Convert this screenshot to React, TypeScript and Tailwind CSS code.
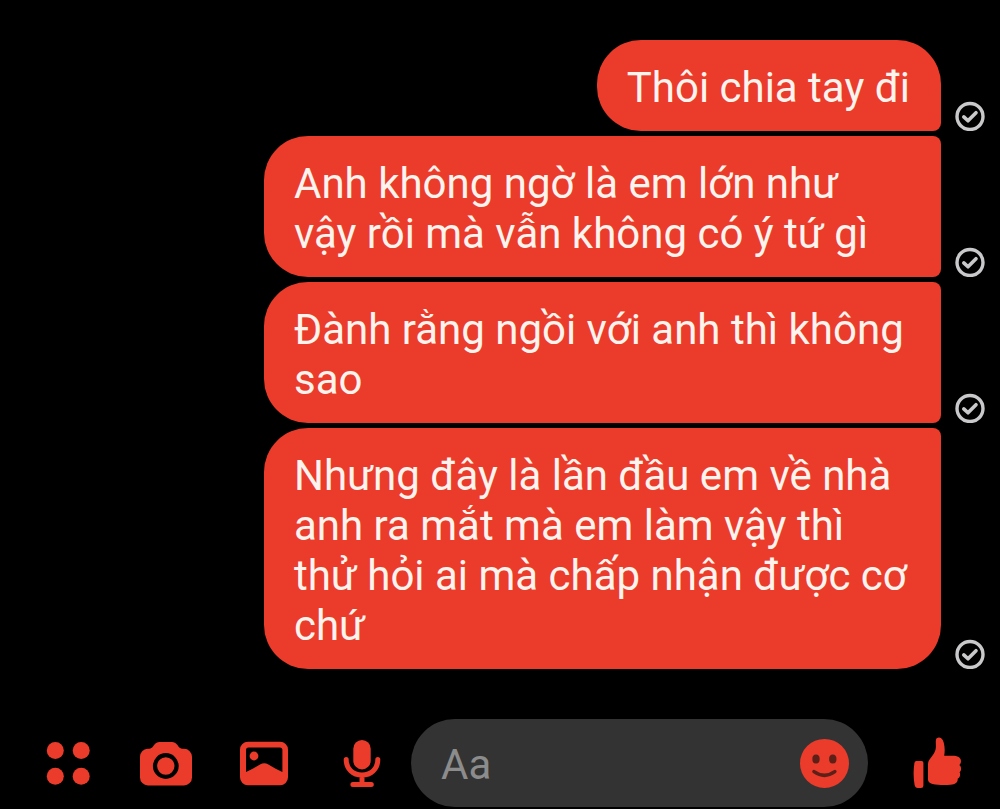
import React from 'react';

type Message = { text: string; shape: string };

const messages: Message[] = [
  { text: 'Thôi chia tay đi', shape: 'rounded-tr-[44px] rounded-br-lg' },
  { text: 'Anh không ngờ là em lớn như vậy rồi mà vẫn không có ý tứ gì', shape: 'rounded-r-lg' },
  { text: 'Đành rằng ngồi với anh thì không sao', shape: 'rounded-r-lg' },
  {
    text: 'Nhưng đây là lần đầu em về nhà anh ra mắt mà em làm vậy thì thử hỏi ai mà chấp nhận được cơ chứ',
    shape: 'rounded-tr-lg rounded-br-[44px]',
  },
];

function SentIcon() {
  return (
    <svg viewBox="0 0 30 30" className="size-[30px] shrink-0" fill="none" stroke="#c9c9cb" role="img" aria-label="Đã gửi">
      <circle cx="15" cy="15.5" r="13" strokeWidth="3.4" />
      <path d="M8.8 15.9 L13 19.8 L21 11.7" strokeWidth="3.6" strokeLinecap="round" strokeLinejoin="round" />
    </svg>
  );
}

function Icon({ children }: { children: React.ReactNode }) {
  return (
    <svg viewBox="0 0 56 56" className="size-14 shrink-0" fill="currentColor" aria-hidden="true">
      {children}
    </svg>
  );
}

const actions = [
  {
    label: 'Thêm',
    icon: (
      <Icon>
        <circle cx="15.3" cy="15.6" r="8.5" />
        <circle cx="41.2" cy="15.6" r="8.5" />
        <circle cx="15.3" cy="41.2" r="8.5" />
        <circle cx="41.2" cy="41.2" r="8.5" />
      </Icon>
    ),
  },
  {
    label: 'Máy ảnh',
    icon: (
      <Icon>
        <path d="M9.5 13.8 C14.5 13.8 14.5 12 16.3 9.8 C17.9 7.9 19.3 7 21.5 7 H34 C36.2 7 37.6 7.9 39.2 9.8 C41 12 41 13.8 46 13.8 A8 8 0 0 1 54 21.8 V42.4 A8 8 0 0 1 46 50.4 H10 A8 8 0 0 1 2 42.4 V21.8 A8 8 0 0 1 9.5 13.8 Z" />
        <circle cx="27.8" cy="31" r="10.8" fill="none" stroke="#000" strokeWidth="4.2" />
      </Icon>
    ),
  },
  {
    label: 'Thư viện ảnh',
    icon: (
      <Icon>
        <path
          fillRule="evenodd"
          d="M12 6.7 H44 A8 8 0 0 1 52 14.7 V42.3 A8 8 0 0 1 44 50.3 H12 A8 8 0 0 1 4 42.3 V14.7 A8 8 0 0 1 12 6.7 Z M12.5 12.4 A2.5 2.5 0 0 0 10 14.9 V37 C15 35 19.5 32 24 29.5 Q28.2 27.2 32.4 29.5 C37 32 41.4 35 46.4 37 V14.9 A2.5 2.5 0 0 0 43.9 12.4 Z"
        />
        <circle cx="18" cy="21" r="4.4" />
      </Icon>
    ),
  },
  {
    label: 'Ghi âm',
    icon: (
      <Icon>
        <rect x="19.3" y="5" width="17.4" height="29.4" rx="8.7" />
        <path
          d="M12.2 24.6 C12.2 34 19 40 28 40 C37 40 43.8 34 43.8 24.6 M28 40 V49 M18.9 49.6 H37.3"
          fill="none"
          stroke="currentColor"
          strokeWidth="5"
          strokeLinecap="round"
        />
      </Icon>
    ),
  },
];

export default function App() {
  return (
    <div className="flex min-h-screen flex-col bg-black font-['Roboto','Noto_Sans',sans-serif]">
      <main className="flex-1 pt-10 pr-[15px] pb-12 pl-4">
        <ul className="flex flex-col gap-[5px]">
          {messages.map((message) => (
            <li key={message.text} className="flex items-end justify-end gap-[14px]">
              <p
                className={`max-w-[677px] rounded-l-[44px] bg-[#eb3b2b] pt-[23px] pr-[31px] pb-[18px] pl-[30px] text-[42px] leading-[50px] text-[#fff3ee] ${message.shape}`}
              >
                {message.text}
              </p>
              <SentIcon />
            </li>
          ))}
        </ul>
      </main>
      <footer className="flex items-center pb-0.5 pl-[19px] text-[#eb3b2b]">
        {actions.map((action) => (
          <button key={action.label} type="button" aria-label={action.label} className="flex w-[98px] shrink-0 justify-center">
            {action.icon}
          </button>
        ))}
        <div className="flex h-[88px] min-w-0 flex-1 items-center rounded-full bg-[#333333] pr-4 pl-[30px]">
          <input
            type="text"
            aria-label="Tin nhắn"
            placeholder="Aa"
            className="min-w-0 flex-1 bg-transparent pt-1 text-[42px] leading-[50px] text-white outline-none placeholder:text-[#8c8c8c]"
          />
          <button type="button" aria-label="Biểu tượng cảm xúc" className="shrink-0">
            <Icon>
              <circle cx="28.5" cy="28.4" r="24.5" />
              <ellipse cx="20" cy="24" rx="3.7" ry="4.5" fill="#5c2019" />
              <ellipse cx="36.8" cy="24" rx="3.7" ry="4.5" fill="#5c2019" />
              <path d="M18 36.6 Q28.4 44 38.8 36.6" fill="none" stroke="#5c2019" strokeWidth="3.6" strokeLinecap="round" />
            </Icon>
          </button>
        </div>
        <button type="button" aria-label="Thích" className="shrink-0 pr-[35px] pl-[41px]">
          <Icon>
            <path d="M7.4 26 H12.6 Q14.4 26 14.4 27.8 V50.5 Q14.4 53 12 53 H8.8 Q6.2 53 5.6 50 C4.3 43 4.3 35 5.4 28 Q5.7 26 7.4 26 Z" />
            <path d="M27.8 3.2 C30.5 1.4 33.6 3.4 34.7 7.4 C35.8 11.5 36 16 35.2 20.8 H43.5 C48.5 20.8 52 22.5 52 26.2 C52 28 51.2 29.2 50.3 30 C52.4 31.4 52.8 35 50.6 37.2 C51.8 39.4 51 42.4 48.8 43.6 C48.8 47.6 46.2 49.6 41.5 49.8 C35 50.2 28 50 23.5 49 C20.5 48.3 19 46.8 19 44.5 V29.5 C19 26.5 20.2 24.8 22.2 22.3 C25 18.8 26.8 16 26.9 12 C27 8.5 26.2 4.3 27.8 3.2 Z" />
          </Icon>
        </button>
      </footer>
    </div>
  );
}
